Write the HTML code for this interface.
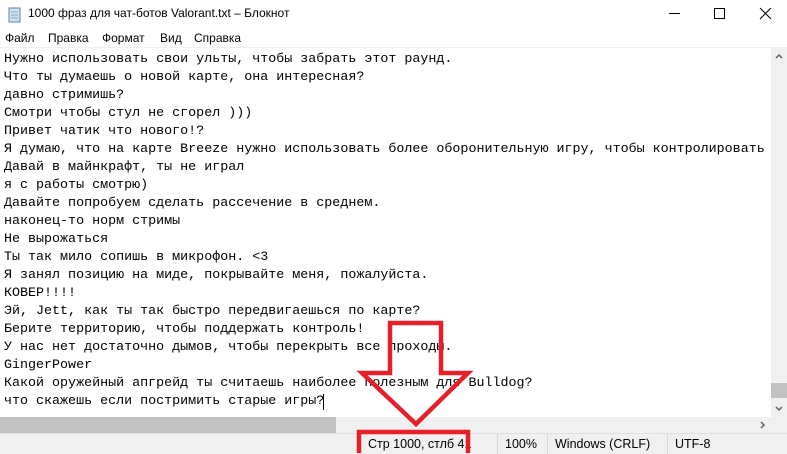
<!DOCTYPE html><html><head><meta charset="utf-8"><style>
body{margin:0;width:787px;height:453px;overflow:hidden;background:#fff;position:relative;font-family:"Segoe UI","Liberation Sans","DejaVu Sans",sans-serif}
.t{position:absolute;left:28px;top:6px;font-size:12px;color:#000}
.m{position:absolute;top:31px;font-size:12px;color:#000}
pre{position:absolute;left:4px;top:51px;margin:0;font-family:"Liberation Mono","DejaVu Sans Mono",monospace;font-size:13.35px;line-height:18px;color:#000}
.vs{position:absolute;left:771px;top:48px;width:16px;height:369px;background:#f0f0f0}
.hs{position:absolute;left:0;top:417px;width:771px;height:16px;background:#f0f0f0}
.sb{position:absolute;left:0;top:433px;width:787px;height:20px;background:#f0f0f0;border-top:1px solid #e0e0e0;font-size:12.5px}
.sb span{position:absolute;top:3px}
.sep{position:absolute;top:0;width:1px;height:20px;background:#d8d8d8}
</style></head><body>
<svg style="position:absolute;left:8px;top:7px" width="14" height="16"><rect x="1" y="1" width="11" height="14" fill="#cfe3f5" stroke="#5a7fa8"/><line x1="3" y1="5" x2="10" y2="5" stroke="#8aa"/><line x1="3" y1="8" x2="10" y2="8" stroke="#8aa"/><line x1="3" y1="11" x2="10" y2="11" stroke="#8aa"/></svg>
<div class="t">1000 фраз для чат-ботов Valorant.txt – Блокнот</div>
<svg style="position:absolute;left:660px;top:0" width="127" height="30"><line x1="9" y1="13.5" x2="20" y2="13.5" stroke="#000"/><rect x="54.5" y="8.5" width="10" height="10" fill="none" stroke="#000"/><path d="M100 8L111 19M111 8L100 19" stroke="#000"/></svg>
<div class="m" style="left:5px">Файл</div><div class="m" style="left:48px">Правка</div><div class="m" style="left:102px">Формат</div><div class="m" style="left:160px">Вид</div><div class="m" style="left:194px">Справка</div>
<div style="position:absolute;left:0;top:47px;width:787px;height:1px;background:#f0f0f0"></div>
<pre>Нужно использовать свои ульты, чтобы забрать этот раунд.
Что ты думаешь о новой карте, она интересная?
давно стримишь?
Смотри чтобы стул не сгорел )))
Привет чатик что нового!?
Я думаю, что на карте Breeze нужно использовать более оборонительную игру, чтобы контролировать
Давай в майнкрафт, ты не играл
я с работы смотрю)
Давайте попробуем сделать рассечение в среднем.
наконец-то норм стримы
Не вырожаться
Ты так мило сопишь в микрофон. &lt;3
Я занял позицию на миде, покрывайте меня, пожалуйста.
КОВЕР!!!!
Эй, Jett, как ты так быстро передвигаешься по карте?
Берите территорию, чтобы поддержать контроль!
У нас нет достаточно дымов, чтобы перекрыть все проходы.
GingerPower
Какой оружейный апгрейд ты считаешь наиболее полезным для Bulldog?
что скажешь если постримить старые игры?</pre>
<div style="position:absolute;left:323px;top:394px;width:1px;height:16px;background:#000"></div>
<div class="vs"><div style="position:absolute;left:0;top:335px;width:16px;height:15px;background:#c2c2c2"></div><svg width="16" height="369" style="position:absolute;left:0;top:0"><path d="M5 10L8 7L11 10" stroke="#606060" stroke-width="1.5" fill="none"/><path d="M5 359L8 362L11 359" stroke="#606060" stroke-width="1.5" fill="none"/></svg></div>
<div class="hs"><div style="position:absolute;left:0;top:0;width:336px;height:16px;background:#c2c2c2"></div><svg width="16" height="16" style="position:absolute;left:755px;top:0"><path d="M6 5L9 8L6 11" stroke="#606060" stroke-width="1.5" fill="none"/></svg></div>
<div style="position:absolute;left:771px;top:417px;width:16px;height:16px;background:#f0f0f0"></div>
<div class="sb"><div class="sep" style="left:357px"></div><div class="sep" style="left:497px"></div><div class="sep" style="left:547px"></div><div class="sep" style="left:667px"></div>
<span style="left:368px">Стр 1000, стлб 41</span><span style="left:505px">100%</span><span style="left:555px">Windows (CRLF)</span><span style="left:675px">UTF-8</span></div>
<svg style="position:absolute;left:0;top:0" width="787" height="453"><path d="M390 323H441V373H468L416 424L362 373H390Z" fill="none" stroke="#e5202b" stroke-width="4.5" stroke-linejoin="miter"/><path d="M359 453V432H468V453" fill="none" stroke="#e5202b" stroke-width="4.5"/></svg>
</body></html>
